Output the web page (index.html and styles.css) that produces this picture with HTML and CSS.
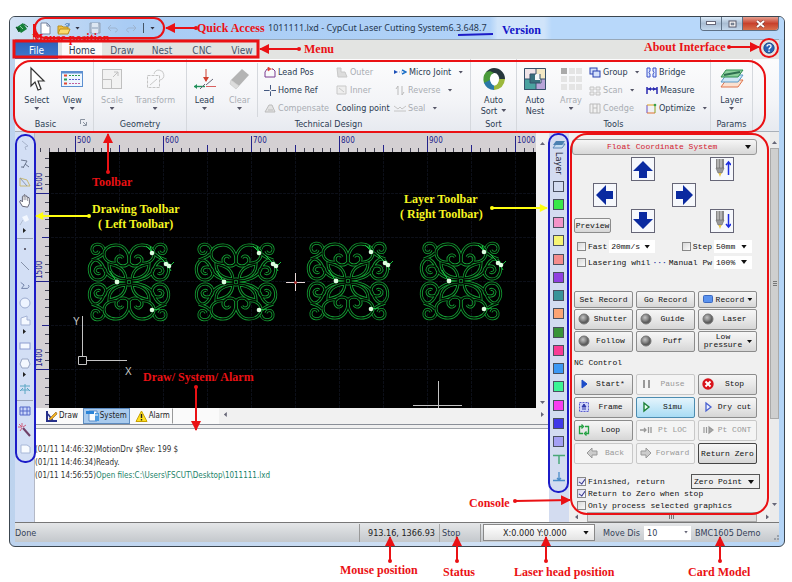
FILE: index.html
```html
<!DOCTYPE html>
<html lang="en">
<head>
<meta charset="utf-8">
<title>CypCut Laser Cutting System</title>
<link rel="stylesheet" href="styles.css">
</head>
<body>
<svg class="defs" aria-hidden="true">
  <defs>
    <g id="quarter">
      <path d="M3-3C4-13 10-16 20-18C20-10 15-4 3-3Z"/>
      <path d="M0-19C3-15 9-15 12-19C15-24 9-29 6-24M0-19C-1-28 4-37 13-37C21-37 25-32 25-28C25-21 18-18 12-19"/>
      <path d="M25-33C27-40 38-39 37-32C36-27 31-28 30-31M26-28C29-24 34-24 37-22"/>
      <path d="M2-1C10-1 22-4 25-13C27-20 33-24 36-21C42-16 40-6 35-3C29 0 23-4 23-10C24-16 33-17 34-11C33-8 30-8 29-9"/>
    </g>
    <g id="lace">
      <use href="#quarter"/><use href="#quarter" transform="scale(-1 1)"/>
      <use href="#quarter" transform="scale(1 -1)"/><use href="#quarter" transform="scale(-1 -1)"/>
      <circle r="3"/>
    </g>
    <g id="part">
      <use href="#lace" class="lace-edge"/><use href="#lace" class="lace-core"/>
      <path class="lead" d="M-13-1L-19-11M23-30L17-36M23-30L21-36M37-19L29-27M41-16L45-20M38-18L42-11M23 28L31 27"/>
      <g class="node"><circle cx="-12" r="2.4"/><circle cx="23" cy="-29" r="2.3"/><circle cx="37" cy="-18" r="2.3"/><circle cx="40" cy="-16" r="2.3"/><circle cx="23" cy="28" r="2.3"/></g>
    </g>
    <pattern id="ticksX" x="40" width="88" height="20" patternUnits="userSpaceOnUse">
      <path d="M.5 4V20M44.5 13V20" stroke="#23238a"/>
      <path d="M9.5 16V20M18.5 16V20M26.5 16V20M35.5 16V20M53.5 16V20M62.5 16V20M71.5 16V20M79.5 16V20" stroke="#445"/>
    </pattern>
    <pattern id="ticksY" y="41" width="14" height="88" patternUnits="userSpaceOnUse">
      <path d="M0 .5H14M7 44.5H14" stroke="#23238a"/>
      <path d="M10 9.5H14M10 18.5H14M10 26.5H14M10 35.5H14M10 53.5H14M10 62.5H14M10 71.5H14M10 79.5H14" stroke="#445"/>
    </pattern>
    <pattern id="grid" x="26" y="41" width="44" height="44" patternUnits="userSpaceOnUse">
      <path d="M.5 0V44M0 .5H44" stroke="#0c0f18" stroke-dasharray="3 1"/>
    </pattern>
    <radialGradient id="ball" cx=".4" cy=".35"><stop offset="0" stop-color="#c4c4c4"/><stop offset=".6" stop-color="#8a8a8a"/><stop offset="1" stop-color="#5c5c5c"/></radialGradient>
    <g id="lamp"><circle cx="6" cy="6" r="5" fill="url(#ball)" stroke="#777"/></g>
    <path id="arrowUp" d="M10 1L20 11H14V18H6V11H0Z" fill="#0a2aa0"/>
    <g id="head"><rect x="1" y="0" width="8" height="9" fill="#888"/><path d="M3 0V9M6 0V9" stroke="#ddd"/><path d="M1 9H9L7 14H3Z" fill="#999" stroke="#666" stroke-width=".6"/><path d="M3.500 14H6.500L5 18Z" fill="#e6c23c"/></g>
    <marker id="tipRed" viewBox="0 0 10 10" refX="9" refY="5" markerWidth="10" markerHeight="10" markerUnits="userSpaceOnUse" orient="auto"><path d="M0 0L10 5L0 10Z" fill="#ea1114"/></marker>
    <marker id="dotRed" viewBox="0 0 4 4" refX="2" refY="2" markerWidth="4" markerHeight="4" markerUnits="userSpaceOnUse"><circle cx="2" cy="2" r="2" fill="#ea1114"/></marker>
    <marker id="tipYellow" viewBox="0 0 10 10" refX="9" refY="5" markerWidth="10" markerHeight="8" markerUnits="userSpaceOnUse" orient="auto"><path d="M0 0L10 5L0 10Z" fill="#ffff10"/></marker>
    <marker id="dotYellow" viewBox="0 0 4 4" refX="2" refY="2" markerWidth="4" markerHeight="4" markerUnits="userSpaceOnUse"><circle cx="2" cy="2" r="2" fill="#ffff10"/></marker>
  </defs>
</svg>

<div class="window">
  <header class="titlebar">
    <svg class="app-logo" width="14" height="12" viewBox="0 0 14 12"><path d="M2 5L8 1L12 7L6 11Z" fill="#17813a"/><path d="M1 5L5 7L4 10ZM9 2L13 5" fill="#0d5c28" stroke="#0d5c28"/><path d="M5 4L8 7" stroke="#8fd0a0"/></svg>
    <div class="quick">
      <button aria-label="New"><svg width="12" height="13" viewBox="0 0 12 13"><path d="M2 1H8L11 4V12H2Z" fill="#fff" stroke="#7784a0"/><path d="M8 1V4H11" fill="none" stroke="#7784a0"/></svg></button>
      <button aria-label="Open"><svg width="15" height="13" viewBox="0 0 15 13"><path d="M1 4H5L6 5H11V11H1Z" fill="#f0c040" stroke="#b98d1c"/><path d="M3 7H13L11 12H1Z" fill="#fbdc6c" stroke="#b98d1c"/><path d="M8 3C9 1 11 1 12 3M12 1V4H9" fill="none" stroke="#4a7db8"/></svg></button>
      <i class="caret"></i>
      <button aria-label="Save"><svg width="12" height="12" viewBox="0 0 12 12"><path d="M1 1H11V11H1Z" fill="#b3c2d4" stroke="#8fa0b5"/><path d="M3 1H9V5H3ZM3 7H9V11H3Z" fill="#dde7f2"/></svg></button>
      <button aria-label="Undo"><svg width="12" height="9" viewBox="0 0 12 9"><path d="M1 4H8C11 4 11 8 8 8M4 1L1 4L4 7" fill="none" stroke="#9db4d0"/></svg></button>
      <button aria-label="Redo"><svg width="12" height="9" viewBox="0 0 12 9"><path d="M11 4H4C1 4 1 8 4 8M8 1L11 4L8 7" fill="none" stroke="#9db4d0"/></svg></button>
      <span class="quick-more"><i class="caret"></i></span>
    </div>
    <h1>1011111.lxd - CypCut Laser Cutting System6.3.648.7</h1>
    <div class="win-buttons">
      <button aria-label="Minimize"><svg width="10" height="5"><rect x=".5" y=".5" width="9" height="3" fill="#fff" stroke="#667"/></svg></button>
      <button aria-label="Maximize"><svg width="9" height="8"><rect x="1" y="1" width="7" height="6" fill="#fff" stroke="#556"/><rect x="3" y="3" width="3" height="2" fill="#89a" stroke="#556" stroke-width=".5"/></svg></button>
      <button aria-label="Close" class="close"><svg width="9" height="8"><path d="M1 1L8 7M8 1L1 7" stroke="#7a3a34" stroke-width="3"/><path d="M1 1L8 7M8 1L1 7" stroke="#fff" stroke-width="2"/></svg></button>
    </div>
  </header>

  <nav class="tabs">
    <a href="#" class="file">File</a><a href="#" class="on">Home</a><a href="#">Draw</a><a href="#">Nest</a><a href="#">CNC</a><a href="#">View</a>
    <button class="help" aria-label="About"><svg width="12" height="12" viewBox="0 0 12 12"><circle cx="6" cy="6" r="5.200" fill="#2a62b4" stroke="#19457f" stroke-width=".8"/><path d="M4 4.500C4 2 8.500 2 8 4.500C8 6 6 5.800 6 7.500M6 8.500V10" fill="none" stroke="#fff" stroke-width="1.300"/></svg></button>
  </nav>

  <section class="ribbon">
    <div class="group basic">
      <div class="tools">
        <button class="big"><svg width="18" height="26" viewBox="0 0 18 26"><path d="M3 2V20L7 16L10 24L13 23L10 15H16Z" fill="#fff" stroke="#333" stroke-width="1.200"/></svg>Select<i class="caret"></i></button>
        <button class="big"><svg width="22" height="26" viewBox="0 0 22 26"><rect x=".5" y="5.500" width="21" height="15" fill="#eef6ff" stroke="#5c8fd0"/><path d="M.5 6.500H21" stroke="#5c8fd0" stroke-width="2"/><path d="M3 9.500H6M3 17.500H6" stroke="#e04830" stroke-width="2"/><path d="M3 13.500H6" stroke="#2a9a50" stroke-width="2"/><path d="M8 9.500H19" stroke="#2a9a50" stroke-dasharray="2 1"/><path d="M8 13.500H19" stroke="#5860c8" stroke-dasharray="2 1"/><path d="M8 17.500H19" stroke="#c060a0" stroke-dasharray="2 1"/></svg>View<i class="caret"></i></button>
      </div>
      <h2>Basic</h2>
      <svg class="launcher" width="7" height="7"><path d="M.5 5V.5H5M3 3L6 6M6.500 3V6.500H3" fill="none" stroke="#8a93a0"/></svg>
    </div>
    <div class="group geometry">
      <div class="tools off">
        <button class="big" disabled><svg width="22" height="26" viewBox="0 0 22 26"><rect x="1.500" y="3.500" width="19" height="19" fill="#f2f2f2" stroke="#c0c0c0"/><path d="M1.500 13.500H10.500V22M12 11L17 6M13 6H17V10" fill="none" stroke="#c0c0c0"/></svg>Scale<i class="caret"></i></button>
        <button class="big" disabled><svg width="22" height="26" viewBox="0 0 22 26"><rect x="3.500" y="9.500" width="12" height="12" fill="none" stroke="#c4c4c4" stroke-dasharray="3 1"/><path d="M6 19L13 13M10 8A5 5 0 1 1 16 14" fill="none" stroke="#c9c9c9"/></svg>Transform<i class="caret"></i></button>
      </div>
      <h2>Geometry</h2>
    </div>
    <div class="group technical">
      <div class="tools">
        <button class="big"><svg width="24" height="26" viewBox="0 0 24 26"><path d="M13 3V15" stroke="#d04030"/><path d="M13 16L10 11H16Z" fill="#d04030"/><path d="M1 20.500H12" stroke="#20905a" stroke-width="1.400"/><path d="M12 18L7 23M13 19L20 13" stroke="#667" /><path d="M13 20.500H23" stroke="#d86060"/><path d="M4 18L1 20.500L4 23Z" fill="#20905a"/></svg>Lead<i class="caret"></i></button>
        <button class="big off" disabled><svg width="22" height="26" viewBox="0 0 22 26"><path d="M2 14L13 3L20 9L10 20Z" fill="#b4b4b4"/><path d="M2 14L10 20L7 23L1 18Z" fill="#dcdcdc" stroke="#c4c4c4" stroke-width=".6"/></svg>Clear<i class="caret"></i></button>
        <div class="small-tools">
          <button><svg width="12" height="11" viewBox="0 0 12 11"><path d="M5 2H3L1 5V10H11V4L9 2H8" fill="none" stroke="#7a3a90"/><path d="M4 0L7 2L4 4ZM7 2H9" fill="#e03a30" stroke="#e03a30" stroke-width=".6"/></svg>Lead Pos</button>
          <button disabled><svg width="12" height="11" viewBox="0 0 12 11"><path d="M1 1H5V5H9L11 10H2Z" fill="#dcdcdc" stroke="#c8c8c8"/></svg>Outer</button>
          <button><svg width="13" height="11" viewBox="0 0 13 11"><path d="M0 3L4 5L0 7Z" fill="#1c50b8"/><path d="M5 5H8" stroke="#9ac" stroke-dasharray="1 1"/><path d="M8 3L12 5L8 7" fill="none" stroke="#1c70c8" stroke-width="1.500"/></svg>Micro Joint<i class="caret"></i></button>
          <button><svg width="12" height="11" viewBox="0 0 12 11"><path d="M0 5.500H12M6.500 0V11" stroke="#445880"/><circle cx="6.500" cy="5.500" r="1" fill="#fff"/></svg>Home Ref</button>
          <button disabled><svg width="12" height="11" viewBox="0 0 12 11"><path d="M1 1H10V9H1ZM3 3L8 7" fill="#eee" stroke="#c8c8c8"/></svg>Inner</button>
          <button disabled><svg width="12" height="11" viewBox="0 0 12 11"><path d="M4 10V1L2 4M8 1V10L10 7" fill="none" stroke="#bbb"/></svg>Reverse<i class="caret"></i></button>
          <button disabled><svg width="12" height="11" viewBox="0 0 12 11"><path d="M1 9L5 2H8L11 9Z" fill="#e2e2e2" stroke="#bcbcbc"/><path d="M4 7H9" stroke="#bcbcbc"/></svg>Compensate</button>
          <button>Cooling point</button>
          <button disabled><svg width="12" height="11" viewBox="0 0 12 11"><path d="M0 3L4 6L6 4L8 6L12 3M0 8H12" fill="none" stroke="#c4c4c4"/></svg>Seal<i class="caret"></i></button>
        </div>
      </div>
      <h2>Technical Design</h2>
    </div>
    <div class="group sort">
      <div class="tools">
        <button class="big"><svg width="24" height="26" viewBox="0 0 24 26"><path d="M12 2A11 11 0 0 1 23 13L17 15A5 6 0 0 0 12 7L7 9L4 6Q8 2 12 2Z" fill="#26363c"/><path d="M4 6Q0 11 2 17L8 20L8 14A5 6 0 0 1 12 7L8 5Z" fill="#4a9a3a"/><path d="M2 17Q5 24 12 24L14 20Q9 19 8 14Z" fill="#2a78a8"/><path d="M12 24Q22 23 23 13L17 13Q17 18 12 20Z" fill="#9cb83c"/><ellipse cx="12.500" cy="13.500" rx="4" ry="6" fill="#fff"/></svg>Auto<br>Sort<i class="caret side"></i></button>
      </div>
      <h2>Sort</h2>
    </div>
    <div class="group nesting">
      <div class="tools">
        <button class="big"><svg width="24" height="26" viewBox="0 0 24 26"><rect x="1" y="2" width="22" height="22" fill="#e6f2f0"/><path d="M1 2H13V8H7V13H1Z" fill="#efe4e8"/><path d="M1 13H7V17H13V24H1Z" fill="#4aa2a0"/><path d="M13 2H23V13H17V8H13Z" fill="#f3e8c4"/><path d="M13 17H18V13H23V24H13Z" fill="#b8a4d8"/><path d="M7 8H17V17H7Z" fill="#38707c"/><path d="M12 8H17V14H12Z" fill="#f4f8f8"/><path d="M1.500 2.500H22.500V23.500H1.500ZM13 2V8H7V17H13V24M17 8V13H23M1 13H7M13 17H18V13" fill="none" stroke="#35506a"/></svg>Auto<br>Nest</button>
        <button class="big off" disabled><svg width="22" height="26" viewBox="0 0 22 26"><rect x="1" y="2" width="6" height="6" fill="#aaa"/><path d="M9 2H15V8H9ZM16 2H22V8H16ZM1 10H7V16H1ZM9 10H15V16H9ZM16 10H22V16H16ZM1 18H7V24H1ZM9 18H15V24H9ZM16 18H22V24H16Z" fill="#e4e4e4"/></svg>Array<i class="caret"></i></button>
        <div class="small-tools two">
          <button><svg width="12" height="11" viewBox="0 0 12 11"><rect x="1" y="1" width="7" height="6" fill="#d4e0fa" stroke="#2840b0"/><rect x="4" y="4" width="7" height="6" fill="#d4e0fa" stroke="#2840b0"/></svg>Group<i class="caret"></i></button>
          <button><svg width="11" height="11" viewBox="0 0 11 11"><path d="M1 1H4V4L3 5.500L4 7V10H1ZM10 1H7V4L8 5.500L7 7V10H10Z" fill="#dce8ff" stroke="#3a50c8"/></svg>Bridge</button>
          <button disabled><svg width="12" height="11" viewBox="0 0 12 11"><path d="M1 2H5V5H1ZM7 2H11V5H7ZM1 7H5V10H1ZM7 7H11V10H7Z" fill="#eee" stroke="#c4c4c4"/></svg>Scan<i class="caret"></i></button>
          <button><svg width="12" height="11" viewBox="0 0 12 11"><path d="M1 2V9M11 2V9M1 4H11" stroke="#2a2ab0" stroke-width="1.500"/><path d="M2 4L5 2V6ZM10 4L7 2V6Z" fill="#2a2ab0"/></svg>Measure</button>
          <button disabled><svg width="12" height="11" viewBox="0 0 12 11"><path d="M1 1H11V10H1ZM4 1V10M8 1V10M4 5H8" fill="#f2f2f2" stroke="#bbb"/></svg>Coedge</button>
          <button><svg width="11" height="11" viewBox="0 0 11 11"><path d="M1 2V10" stroke="#6a50c0"/><path d="M1 10H9" stroke="#e07030"/><path d="M9 10V2" stroke="#8aa020"/><path d="M1 2H9" stroke="#e0a020"/><circle cx="9" cy="2" r="1.300" fill="#38a048"/></svg>Optimize<i class="caret"></i></button>
        </div>
      </div>
      <h2>Tools</h2>
    </div>
    <div class="group params">
      <div class="tools">
        <button class="big"><svg width="24" height="26" viewBox="0 0 24 26"><path d="M6 14H23L18 21H1Z" fill="#fbe0d0" stroke="#e0744c"/><path d="M6 9H23L18 16H1Z" fill="#cfe6f6" stroke="#5a9ac8"/><path d="M6 4H23L18 11H1Z" fill="#8ccf9c" stroke="#2f9050"/><path d="M4 9L20 6" stroke="#2f7050" stroke-width="2"/></svg>Layer<i class="caret"></i></button>
      </div>
      <h2>Params</h2>
    </div>
  </section>

  <main class="body">
    <aside class="draw-bar" aria-label="Drawing tools">
      <svg width="14" height="12" viewBox="0 0 14 12"><path d="M4 1L10 6L7 7L8 10" fill="none" stroke="#a8b4cc"/></svg>
      <svg width="14" height="12" viewBox="0 0 14 12"><path d="M3 2L9 3L5 10M7 6L11 9M3 9H6" fill="none" stroke="#6c7890"/></svg>
      <svg width="14" height="12" viewBox="0 0 14 12"><path d="M2 2V10H12L9 4Z" fill="none" stroke="#c8b870"/><path d="M2 2L9 10" stroke="#8a96b0"/></svg>
      <svg width="14" height="14" viewBox="0 0 14 16"><path d="M4 14L1 9L2 7L4 9V3Q5 1 6 3V1Q7 0 8 2V3Q9 1 10 4Q12 3 12 6V11L10 15Z" fill="#fff" stroke="#556"/><path d="M6 3V7M8 3V7M10 4V8" stroke="#556" stroke-width=".7"/></svg>
      <svg width="14" height="12" viewBox="0 0 14 12"><path d="M2 11L5 6" stroke="#b0bcd0"/><path d="M4 3L9 1L11 6L7 8Z" fill="#f4f8ff"/></svg>
      <i class="more"></i><hr>
      <svg width="14" height="12" viewBox="0 0 14 12"><rect x="6" y="5" width="2" height="2" fill="#667"/></svg>
      <svg width="14" height="12" viewBox="0 0 14 12"><path d="M3 1L11 9" stroke="#8490a8"/></svg>
      <svg width="14" height="12" viewBox="0 0 14 14"><path d="M2 4L6 7L3 11H10Q13 9 11 7" fill="none" stroke="#6878a0"/></svg>
      <svg width="14" height="12" viewBox="0 0 14 12"><circle cx="7" cy="6" r="5" fill="#eef4ff" stroke="#9cacd0"/></svg>
      <svg width="14" height="12" viewBox="0 0 14 12"><path d="M3 3L9 1V5H12V10H3Z" fill="#f4f8ff" stroke="#a4b2d4"/></svg>
      <i class="more"></i>
      <svg width="14" height="12" viewBox="0 0 14 12"><rect x="2" y="3" width="10" height="6" fill="#f4f8ff" stroke="#8c9cd0"/></svg>
      <svg width="14" height="12" viewBox="0 0 14 12"><path d="M4 1H10L12 6L10 10H4L2 6Z" fill="#f4f8ff" stroke="#98a6c4"/></svg>
      <i class="more"></i>
      <svg width="14" height="12" viewBox="0 0 14 12"><path d="M2 3H12M7 1V11M2 8L5 5M12 8L9 5M3 7H11" fill="none" stroke="#5aa6c4"/></svg>
      <hr>
      <svg width="14" height="12" viewBox="0 0 14 12"><path d="M2 2H12V10H2ZM5 2V10M9 2V10M2 6H12" fill="#ccd8fa" stroke="#5468c8"/></svg>
      <svg width="14" height="14" viewBox="0 0 14 14"><path d="M5 5L12 13" stroke="#704068" stroke-width="2"/><path d="M4 0V4M0 4H4M1 1L4 4M8 2L5 4M2 8L4 5" stroke="#d06080"/></svg>
      <svg width="14" height="12" viewBox="0 0 14 12"><path d="M3 2H9L12 4V10H3Z" fill="#f8fbff" stroke="#a8b8d8"/></svg>
    </aside>

    <div class="center">
      <div class="workspace">
        <svg class="ruler-x" width="100%" height="20"><rect width="100%" height="20" fill="url(#ticksX)"/>
          <text x="42" y="11">500</text><text x="130" y="11">600</text><text x="218" y="11">700</text><text x="306" y="11">800</text><text x="394" y="11">900</text><text x="482" y="11">1000</text></svg>
        <svg class="ruler-y" width="14" height="256"><rect width="14" height="256" fill="url(#ticksY)"/>
          <text transform="translate(7 39) rotate(-90)">1600</text><text transform="translate(7 127) rotate(-90)">1500</text><text transform="translate(7 215) rotate(-90)">1400</text></svg>
        <svg class="canvas" width="100%" height="256">
          <rect width="100%" height="256" fill="#000"/><rect width="100%" height="256" fill="url(#grid)"/>
          <use href="#part" x="80" y="130"/><use href="#part" x="187" y="130"/><use href="#part" x="299" y="129"/><use href="#part" x="412" y="129"/>
          <path d="M246.500 121V139M237 130.500H256" stroke="#e8d8d8"/><circle cx="246.500" cy="130.500" r="1.500" fill="#a33"/>
          <path d="M33.500 164V204M37 208.500H78M29.500 204.500H37.500V212.500H29.500ZM389.500 229V256M364 253.500H413" fill="none" stroke="#c4c4c4"/>
          <text x="24" y="173">Y</text><text x="76" y="223">X</text>
        </svg>
        <div class="scroll-y"><i class="up"></i><i class="down"></i></div>
      </div>
      <div class="log-tabs">
        <button><svg width="13" height="13" viewBox="0 0 13 13"><path d="M2 1V11H12" fill="none" stroke="#26308a" stroke-width="2"/><path d="M3 4L8 11" stroke="#26308a" stroke-width="1.500"/><path d="M4 9L11 2L12 4L6 10Z" fill="#f0b020" stroke="#8a5a10" stroke-width=".6"/></svg>Draw</button>
        <button class="on"><svg width="13" height="13" viewBox="0 0 13 13"><path d="M3 1H11V11H3Z" fill="#f8fcff" stroke="#5a8cc8"/><path d="M0 1H8V4H0Z" fill="#2a84d8"/><path d="M9 3H13V11H9Z" fill="#4a9ae0"/><path d="M9 5L12 5" stroke="#fff"/></svg>System</button>
        <button class="last"><svg width="13" height="13" viewBox="0 0 13 13"><path d="M6.500 1L12 11.500H1Z" fill="#ffe020" stroke="#c8a000" stroke-linejoin="round"/><path d="M6.500 4V8M6.500 9V10.500" stroke="#222" stroke-width="1.400"/></svg>Alarm</button>
        <span class="scroll-x"><i class="left"></i><i class="right"></i></span>
      </div>
      <div class="log"><p>(01/11 14:46:32)MotionDrv $Rev: 199 $</p><p>(01/11 14:46:34)Ready.</p><p>(01/11 14:56:55)<span>Open files:C:\Users\FSCUT\Desktop\1011111.lxd</span></p></div>
    </div>

    <aside class="layer-bar">
      <svg width="14" height="9" viewBox="0 0 14 9"><path d="M4 4H13L10 8H1Z" fill="#c4dcf0" stroke="#5a88b8"/><path d="M4 1H13L10 5H1Z" fill="#4a80b0"/></svg>
      <span class="layer-name">Layer</span>
      <div class="swatches">
        <button class="c1" aria-label="Layer 0"></button><button class="c2" aria-label="Layer 1"></button><button class="c3" aria-label="Layer 2"></button><button class="c4" aria-label="Layer 3"></button><button class="c5" aria-label="Layer 4"></button><button class="c6" aria-label="Layer 5"></button><button class="c7" aria-label="Layer 6"></button><button class="c8" aria-label="Layer 7"></button><button class="c9" aria-label="Layer 8"></button><button class="c10" aria-label="Layer 9"></button><button class="c11" aria-label="Layer 10"></button><button class="c12" aria-label="Layer 11"></button><button class="c13" aria-label="Layer 12"></button><button class="c14" aria-label="Layer 13"></button><button class="c15" aria-label="Layer 14"></button>
        <svg width="12" height="10" viewBox="0 0 12 10"><path d="M0 1.500H12M6 1V10" stroke="#4aa878" stroke-width="1.500"/></svg>
        <svg width="12" height="10" viewBox="0 0 12 10"><path d="M0 8.500H12M6 0V9M4 6L6 8L8 6" fill="none" stroke="#4a8cc8" stroke-width="1.300"/></svg>
      </div>
    </aside>

    <aside class="console">
      <div class="panel">
        <span class="pick system"><select aria-label="Coordinate system"><option>Float Coordinate System</option></select></span>
        <div class="jog">
          <button class="j-up" aria-label="Up"><svg width="20" height="18"><use href="#arrowUp"/></svg></button>
          <button class="j-left" aria-label="Left"><svg width="20" height="20"><use href="#arrowUp" transform="rotate(-90 10 10)"/></svg></button>
          <button class="j-right" aria-label="Right"><svg width="20" height="20"><use href="#arrowUp" transform="rotate(90 10 10)"/></svg></button>
          <button class="j-down" aria-label="Down"><svg width="20" height="18"><use href="#arrowUp" transform="rotate(180 10 9)"/></svg></button>
          <button class="z-up" aria-label="Head up"><svg width="18" height="19"><use href="#head" x="2"/><path d="M15.500 16V4M13 6L15.500 3L18 6" fill="none" stroke="#1c2ce0" stroke-width="1.500"/></svg></button>
          <button class="z-down" aria-label="Head down"><svg width="18" height="19"><use href="#head" x="2"/><path d="M15.500 3V15M13 13L15.500 16L18 13" fill="none" stroke="#1c2ce0" stroke-width="1.500"/></svg></button>
          <button class="btn preview">Preview</button>
        </div>
        <div class="speed">
          <label><input type="checkbox">Fast</label><span class="pick"><select aria-label="Fast speed"><option>20mm/s</option></select></span>
          <label class="push"><input type="checkbox">Step</label><span class="pick"><select aria-label="Step length"><option>50mm</option></select></span>
        </div>
        <div class="speed">
          <label><input type="checkbox">Lasering whil<b>···</b></label>
          <label class="push" for="pw">Manual Pw</label><span class="pick"><select id="pw"><option>100%</option></select></span>
        </div>
        <div class="pad manual">
          <button class="btn short">Set Record</button><button class="btn short">Go Record</button><button class="btn short"><svg width="10" height="8"><rect x=".5" y=".5" width="9" height="7" rx="1" fill="#5a92ee" stroke="#3a68c0"/></svg>Record<i class="caret"></i></button>
          <button class="btn icon"><svg width="12" height="12"><use href="#lamp"/></svg><span>Shutter</span></button><button class="btn icon"><svg width="12" height="12"><use href="#lamp"/></svg><span>Guide</span></button><button class="btn icon"><svg width="12" height="12"><use href="#lamp"/></svg><span>Laser</span></button>
          <button class="btn icon"><svg width="12" height="12"><use href="#lamp"/></svg><span>Follow</span></button><button class="btn icon"><svg width="12" height="12"><use href="#lamp"/></svg><span>Puff</span></button><button class="btn icon"><span>Low<br>pressure</span><i class="caret"></i></button>
        </div>
        <h3>NC Control</h3>
        <div class="pad nc">
          <button class="btn icon"><svg width="12" height="12"><path d="M4 2L9 6L4 10Z" fill="#1c4cc8" stroke="#1c4cc8"/></svg><span>Start*</span></button>
          <button class="btn icon" disabled><svg width="12" height="12"><path d="M3 2H5V10H3ZM8 2H10V10H8Z" fill="#999"/></svg><span>Pause</span></button>
          <button class="btn icon"><svg width="12" height="12"><circle cx="6" cy="6" r="5.700" fill="#d8121a"/><path d="M3.500 3.500L8.500 8.500M8.500 3.500L3.500 8.500" stroke="#fff" stroke-width="2"/></svg><span>Stop</span></button>
          <button class="btn icon"><svg width="12" height="12"><path d="M1.500 1.500H10.500V10.500H1.500Z" fill="#cfd4fa" stroke="#5c60d0" stroke-dasharray="2 1"/><path d="M6 3L8 6H4ZM4 8H8" fill="#3038a8" stroke="#3038a8"/></svg><span>Frame</span></button>
          <button class="btn icon hot"><svg width="12" height="12"><path d="M4 2L9 6L4 10Z" fill="#e8fff0" stroke="#1c8038" stroke-width="1.400"/></svg><span>Simu</span></button>
          <button class="btn icon"><svg width="12" height="12"><path d="M4 2L9 6L4 10Z" fill="#eef2ff" stroke="#4860d0" stroke-width="1.300"/></svg><span>Dry cut</span></button>
          <button class="btn icon"><svg width="12" height="12"><path d="M4.500 2.500H1.500V9.500H5M7.500 9.500H10.500V2.500H7M3.500 .5L5.500 2.500L3.500 4.500M8.500 7.500L6.500 9.500L8.500 11.500" fill="none" stroke="#22a040" stroke-width="1.300"/></svg><span>Loop</span></button>
          <button class="btn icon" disabled><svg width="12" height="12"><path d="M0 6H6M4 4L6 6L4 8M8.500 3V9M11 3V9" fill="none" stroke="#999" stroke-width="1.300"/></svg><span>Pt LOC</span></button>
          <button class="btn icon" disabled><svg width="12" height="12"><path d="M2 3V9M4.500 3V9M7 3L11 6L7 9Z" fill="#aaa" stroke="#999" stroke-width="1.200"/></svg><span>Pt CONT</span></button>
          <button class="btn icon arrowed" disabled><svg width="12" height="12"><path d="M6 1L1 6L6 11V8H11V4H6Z" fill="#ccc" stroke="#999"/></svg><span>Back</span></button>
          <button class="btn icon" disabled><svg width="12" height="12"><path d="M6 1L11 6L6 11V8H1V4H6Z" fill="#ccc" stroke="#999"/></svg><span>Forward</span></button>
          <button class="btn strong">Return Zero</button>
        </div>
        <div class="finish">
          <label><input type="checkbox" checked>Finished, return</label>
          <span class="pick boxed"><select aria-label="Return point"><option>Zero Point</option></select></span>
          <label><input type="checkbox" checked>Return to Zero when stop</label>
          <label class="cut"><input type="checkbox">Only process selected graphics</label>
        </div>
        <div class="hbar"><i class="left"></i><span></span><i class="right"></i></div>
      </div>
      <div class="vbar"><i class="up"></i><span></span><i class="down"></i></div>
    </aside>
  </main>

  <footer class="status">
    <span class="done">Done</span><span class="mouse">913.16, 1366.93</span><span class="state">Stop</span>
    <span class="pick head-pos"><select aria-label="Laser head position"><option>X:0.000 Y:0.000</option></select></span>
    <label for="dis">Move Dis</label>
    <span class="pick dis"><select id="dis"><option>10</option></select></span>
    <span class="card">BMC1605 Demo</span>
    <svg class="grip" width="7" height="7"><path d="M5 0H7V2H5ZM5 3H7V5H5ZM2 3H4V5H2Z" fill="#9aa0a8"/></svg>
  </footer>
</div>

<svg class="notes from-left" width="792" height="582">
  <g class="blue-line"><rect x="16" y="135" width="19" height="327" rx="9"/></g>
  <g class="red-text"><text x="32" y="42">Mouse position</text></g>
  <g class="red-line">
    <rect x="35" y="18" width="129" height="20" rx="10"/>
    <path class="heavy" d="M14 41H258V57H14Z"/><path d="M34 24V37M35 33L38 38"/>
    <path class="arrow" d="M196 28H166"/><path class="arrow" d="M299 49H260"/><path class="arrow" d="M108 172V134"/><path class="arrow" d="M196 387V430"/><path class="arrow" d="M390 561V537"/><path class="arrow" d="M457 561V537"/>
  </g>
  <path class="arrow-yellow" d="M89 216H36"/>
  <g class="red-text">
    <text x="197" y="32">Quick Access</text><text x="304" y="53">Menu</text><text x="92" y="186">Toolbar</text>
    <text x="143" y="381">Draw/ System/ Alarm</text>
  </g>
  <g class="yellow-text"><text x="92" y="213">Drawing Toolbar</text><text x="98" y="228">( Left Toolbar)</text></g>
</svg>
<div class="ribbon-ring"></div>
<svg class="notes from-right" width="792" height="582">
  <g class="blue-line"><rect x="549" y="134" width="19" height="358" rx="9"/><path d="M458 35L493 34"/></g>
  <g class="red-line">
    <rect x="571" y="134" width="197" height="380" rx="16"/><circle cx="769" cy="48" r="9"/>
    <path class="arrow" d="M729 47H759"/><path class="arrow" d="M515 501L570 500"/><path class="arrow" d="M546 561V537"/><path class="arrow" d="M720 561V537"/>
  </g>
  <path class="arrow-yellow" d="M492 208H547"/>
  <g class="red-text">
    <text x="644" y="51">About Interface</text><text x="469" y="507">Console</text>
    <text x="340" y="574">Mouse position</text><text x="443" y="576">Status</text><text x="514" y="576">Laser head position</text><text x="688" y="576">Card Model</text>
  </g>
  <g class="yellow-text"><text x="404" y="203">Layer Toolbar</text><text x="400" y="218">( Right Toolbar)</text></g>
  <text class="blue-text" x="502" y="34">Version</text>
</svg>
</body>
</html>
```

FILE: styles.css
```css
* { box-sizing: border-box; }
body {
  margin: 0;
  position: relative;
  background: #fff;
  color: #2b3b52;
  font: 9px/12px "DejaVu Sans Condensed", "DejaVu Sans", sans-serif;
  overflow-x: hidden;
}
h1, h2, h3, p { margin: 0; font-size: inherit; font-weight: normal; }
button, select, input { margin: 0; padding: 0; font: inherit; color: inherit; border: 0; background: none; }
svg { display: block; flex: none; }
.defs { position: absolute; width: 0; height: 0; }
.caret { flex: none; width: 5px; height: 3px; background: currentColor; clip-path: polygon(0 0, 100% 0, 50% 100%); }
.up, .down, .left, .right { width: 5px; height: 5px; background: #667; }
.up { clip-path: polygon(0 80%, 50% 20%, 100% 80%); }
.down { clip-path: polygon(0 20%, 50% 80%, 100% 20%); }
.left { clip-path: polygon(80% 0, 20% 50%, 80% 100%); }
.right { clip-path: polygon(20% 0, 80% 50%, 20% 100%); }

.window {
  margin: 16px 7px 36px 9px;
  padding: 0 5px 4px;
  border: 1px solid #3c4650;
  border-radius: 6px;
  background: linear-gradient(90deg, #bdd3ee, #cfe0f4 60%, #b4d4f6);
}

/* title bar */
.titlebar { display: flex; align-items: center; height: 22px; background: linear-gradient(90deg, #d3e2f4 0, #a9ccf4 15%, #b0d2f8 62%, #d0e4fa 63%, #d0e4fa 69%, #b8d8fa 70%); margin: 0 -5px; padding: 0 5px; border-radius: 5px 5px 0 0; overflow: hidden; }
.quick { display: flex; align-items: center; gap: 6px; margin-left: 10px; width: 116px; color: #334; }
.quick .caret { margin: 0 3px 0 -3px; }
.quick-more { display: flex; height: 10px; align-items: center; padding-left: 6px; border-left: 1px solid #456; }
.quick .quick-more .caret { margin: 0; }
.titlebar h1 { margin-left: 113px; white-space: nowrap; font-family: "Noto Sans", sans-serif; color: #263850; }
.win-buttons { display: flex; align-self: flex-start; margin-left: auto; height: 14px; border: 1px solid #5e7186; border-top: 0; border-radius: 0 0 4px 4px; overflow: hidden; }
.win-buttons button { display: grid; place-items: center; width: 21px; background: linear-gradient(#dcecfb, #a9bdd3 50%, #c4d8ec); border-right: 1px solid #5e7186; }
.win-buttons .close { width: 35px; border: 0; background: linear-gradient(#e6a090, #c8412c 50%, #d8704c); }

/* menu tabs */
.tabs { display: flex; height: 20px; background: #e3e4e2; border-top: 1px solid #98a8b8; font-size: 10px; color: #44546c; }
.tabs a { display: grid; place-items: center; width: 40px; color: inherit; text-decoration: none; padding-top: 2px; }
.tabs .file { width: 43px; background: linear-gradient(#2d5fb8, #3f7ad0); color: #fff; margin-right: 4px; }
.tabs .on { background: #fcfcfc; color: #2b3b52; }
.help { align-self: flex-start; margin-left: auto; padding: 2px 4px 0 0; }

/* ribbon */
.ribbon { display: flex; height: 73px; background: linear-gradient(#fcfcfd, #f3f4f7 60%, #e7eaf0); border-bottom: 1px solid #a9afb8; }
.group { position: relative; display: flex; flex-direction: column; justify-content: space-between; border-right: 1px solid #d5d8dd; padding: 7px 0 1px; }
.group h2 { text-align: center; }
.basic { width: 79px; padding-right: 3px; }
.basic h2 { padding-right: 14px; }
.basic .tools { padding-left: 4px; }
.geometry { width: 93px; }
.technical { width: 284px; }
.sort { width: 46px; }
.nesting { width: 194px; }
.params { width: 42px; }
.launcher { position: absolute; right: 6px; bottom: 5px; }
.tools { display: flex; align-items: flex-start; height: 51px; }
.off, button:disabled { color: #a9adb3; }
.big { display: block; text-align: center; width: 36px; line-height: 11px; }
.big svg { margin: 0 auto 3px; }
.big .caret { display: block; margin: 1px auto 0; color: #556; }
.big .side { display: inline-block; margin: 0 0 2px 4px; }
.geometry .big:last-child { width: 50px; }
.sort .big, .params .big { width: 100%; }
.technical .big { width: 35px; }
.small-tools { display: grid; grid-template-columns: 72px 58px auto; grid-auto-rows: 18px; margin: -3px 0 0; padding-left: 6px; border-left: 1px solid #d5d8dd; }
.small-tools.two { grid-template-columns: 57px auto; border: 0; padding-left: 0; }
.small-tools button { display: flex; align-items: center; gap: 2px; white-space: nowrap; }
.small-tools .caret { margin-left: 5px; color: #556; }

/* body */
.body { display: grid; grid-template-columns: 20px 1fr 20px 210px; background: #f0f0f0; }
.draw-bar { display: flex; flex-direction: column; align-items: center; gap: 6px; padding-top: 8px; background: #d3dff5; border-right: 1px solid #b4b9c6; }
.draw-bar hr { width: 16px; margin: -1px 0 -2px; border: 0; border-top: 1px solid #9aa4b8; }
.more { width: 3px; height: 5px; margin-top: -4px; background: #222; clip-path: polygon(0 0, 100% 50%, 0 100%); }
.center { display: flex; flex-direction: column; min-width: 0; }
.workspace { display: grid; grid-template-columns: 14px 1fr 13px; overflow: hidden; }
.ruler-x { grid-column: 1 / 3; background: #d4d0d3; }
.ruler-y { grid-row: 2; background: #d4d0d3; }
.ruler-x text, .ruler-y text { font-size: 8px; fill: #23238a; }
.canvas { grid-row: 2; }
.canvas text { font: 10px "Liberation Sans", sans-serif; fill: #c8c8c8; }
.scroll-y { grid-column: 3; grid-row: 1 / 3; display: flex; flex-direction: column; justify-content: space-between; align-items: center; padding: 9px 0 3px; background: #f1f1f1; }
.lace-edge { fill: none; stroke: #14a236; stroke-width: 3; }
.lace-core { fill: none; stroke: #020a02; stroke-width: 1.400; }
.lead { fill: none; stroke: #18c040; }
.node { fill: #dcffe0; }
.log-tabs { display: flex; height: 17px; padding-left: 7px; background: #fafafa; border-bottom: 1px solid #8a8f98; color: #222; font-size: 8px; }
.log-tabs button { display: flex; align-items: center; gap: 1px; padding: 0 2px; margin-right: 2px; border: 1px solid transparent; }
.log-tabs .on { background: #a9cbee; border-color: #5e8cc0; }
.log-tabs .last { border-right-color: #999; }
.scroll-x { flex: 1; display: flex; justify-content: space-between; margin-left: 44px; padding: 4px 4px 0; background: #f1f1f1; }
.log { flex: 1; margin-top: 3px; padding: 14px 0 0; border-top: 1px solid #a0a4aa; background: #fff; color: #333; }
.log p { line-height: 13px; white-space: nowrap; font-size: 8px; }
.log span { color: #1a8268; }

.layer-bar { display: flex; flex-direction: column; align-items: center; background: #d3dcf0; padding-top: 8px; }
.layer-name { writing-mode: vertical-rl; margin-top: 3px; font-size: 9px; line-height: 12px; color: #223; }
.swatches { display: flex; flex-direction: column; justify-content: space-between; height: 301px; margin-top: 6px; }
.swatches button { width: 11px; height: 11px; border: 1px solid #4a5060; }
.c1 { background: #d3dcf0; } .c2 { background: #38e848; } .c3 { background: #f494c8; } .c4 { background: #f6f474; } .c5 { background: #f48c8c; }
.c6 { background: #9040e0; } .c7 { background: #389498; } .c8 { background: #fca474; } .c9 { background: #389438; } .c10 { background: #f83c94; }
.c11 { background: #3c98f4; } .c12 { background: #3cf494; } .c13 { background: #f83cf0; } .c14 { background: #4038e8; } .c15 { background: #a4a0f4; }

/* console */
.console { display: flex; font: 8px/9px "Liberation Mono", monospace; color: #111; height: 390px; }
.panel { flex: 1; min-width: 0; padding: 7px 0 0 5px; display: flex; flex-direction: column; }
.pick { position: relative; display: inline-flex; background: #fff; }
.pick::after { content: ""; position: absolute; right: 5px; top: 50%; margin-top: -2px; width: 6px; height: 4px; background: #111; clip-path: polygon(0 0, 100% 0, 50% 100%); pointer-events: none; }
.pick select { appearance: none; width: 100%; cursor: pointer; }
.system { width: 185px; height: 17px; border: 1px solid #999; border-radius: 3px; background: linear-gradient(#f6f6f6, #d8d8d8); color: #d42030; margin-left: -2px; }
.system select { padding-left: 34px; }
.jog { display: grid; grid-template-columns: 19px 24px 14px 24px 17px 24px 14px 24px; grid-template-rows: 24px 24px 24px; row-gap: 2px; margin-top: 2px; }
.jog > button:not(.btn) { display: grid; place-items: center; border: 1px solid #667; background: #f6f8fc; }
.j-up { grid-area: 1 / 4; } .j-left { grid-area: 2 / 2; } .j-right { grid-area: 2 / 6; } .j-down { grid-area: 3 / 4; }
.z-up { grid-area: 1 / 8; } .z-down { grid-area: 3 / 8; }
.btn { display: flex; align-items: center; justify-content: center; gap: 3px; height: 21px; border: 1px solid #8c8c8c; border-radius: 2px; background: linear-gradient(#f6f6f6, #e8e8e8 50%, #d6d6d6); white-space: nowrap; }
.preview { grid-area: 3 / 1 / 4 / 4; align-self: end; width: 37px; height: 15px; }
.speed { display: flex; align-items: center; height: 17px; padding: 0 18px 0 3px; }
.jog + .speed { margin-top: 6px; }
.speed label, .finish label { display: flex; align-items: center; gap: 2px; white-space: nowrap; }
.speed .push { margin-left: auto; }
.speed .pick { width: 38px; height: 13px; margin-left: 2px; }
.speed label:first-child + .pick { width: 46px; }
.speed b { color: #2030a0; }
.speed select { padding-left: 2px; }
input[type="checkbox"] { appearance: none; width: 9px; height: 9px; border: 1px solid #888; background: linear-gradient(135deg, #d8d8d8, #fafafa); }
input[type="checkbox"]:checked { background: linear-gradient(135deg, #d8d8f0, #fafaff); position: relative; }
input[type="checkbox"]:checked::after { content: ""; position: absolute; left: 2px; top: 0; width: 3px; height: 5px; border: solid #33348c; border-width: 0 1px 1px 0; transform: rotate(35deg); }
.pad { display: grid; grid-template-columns: repeat(3, 59px); gap: 2px 3px; }
.manual { margin-top: 21px; row-gap: 1px; }
.short { height: 17px; }
.icon { justify-content: flex-start; padding: 0 4px 0 3px; }
.icon span { flex: 1; text-align: center; line-height: 8px; }
.arrowed { padding-left: 11px; }
.btn:disabled { border-color: #c8c8c8; background: #f4f4f4; color: #999; }
.hot { background: linear-gradient(#e4f4fc, #a8dcf4); border-color: #4c8cb0; }
.strong { border-color: #444; }
.console h3 { margin: 6px 0; line-height: 10px; }
.finish { display: grid; grid-template-columns: 1fr auto; align-items: center; grid-auto-rows: 12px; margin-top: 12px; padding: 0 10px 0 3px; }
.boxed { height: 15px; width: 69px; border: 1px solid #555; background: #eee; }
.boxed select { padding-left: 2px; }
.finish label:nth-of-type(n + 2) { grid-column: 1 / 3; }
.hbar { display: flex; justify-content: space-between; align-items: center; height: 11px; margin-top: auto; }
.hbar span { width: 170px; height: 10px; border: 1px solid #aaa; background: repeating-linear-gradient(90deg, #777 0 1px, transparent 1px 2px) center / 6px 4px no-repeat, #dcdcdc; }
.vbar { width: 9px; display: flex; flex-direction: column; align-items: center; padding: 8px 0 15px; background: #ebebeb; }
.vbar span { width: 9px; height: 271px; margin: 3px 0 auto; border: 1px solid #aaa; background: repeating-linear-gradient(#777 0 1px, transparent 1px 2px) center / 4px 6px no-repeat, #cfcfcf; }

/* status bar */
.status { display: flex; align-items: center; height: 20px; border-top: 1px solid #777; background: linear-gradient(#e4e6e8, #c4c8cc); color: #344258; white-space: nowrap; }
.done { flex: 1; }
.mouse { width: 80px; padding-left: 8px; border-left: 1px solid #999; line-height: 18px; color: #222; }
.state { width: 42px; border-left: 1px solid #aaa; border-right: 1px solid #999; line-height: 18px; padding-left: 2px; }
.head-pos { width: 112px; height: 17px; margin: 0 8px 0 2px; border: 1px solid #888; background: linear-gradient(#fff, #e4e4e4); color: #222; }
.head-pos select { padding-left: 19px; }
.dis { width: 47px; height: 14px; margin: 0 4px; }
.dis select { padding-left: 3px; }
.dis::after { right: 3px; width: 4px; height: 3px; background: #667; }
.card { width: 77px; }
.grip { align-self: flex-end; }

/* call-outs drawn over the window */
.notes, .ribbon-ring { position: absolute; top: 0; pointer-events: none; }
.from-left { left: 0; }
.from-right { right: 0; }
.ribbon-ring { left: 13px; right: 26px; top: 60px; height: 73px; border: 2px solid #ea1114; border-radius: 18px; }
.notes text { font: bold 12px "Liberation Serif", serif; }
.red-text { fill: #ea1114; }
.yellow-text { fill: #f6f620; }
.blue-text { fill: #1414c8; }
.red-line, .blue-line { fill: none; stroke-width: 2; }
.red-line { stroke: #ea1114; }
.blue-line { stroke: #1c1cc8; }
.heavy { stroke-width: 3; }
.arrow { marker-start: url(#dotRed); marker-end: url(#tipRed); }
.arrow-yellow { stroke: #ffff10; stroke-width: 2; marker-start: url(#dotYellow); marker-end: url(#tipYellow); }
```
